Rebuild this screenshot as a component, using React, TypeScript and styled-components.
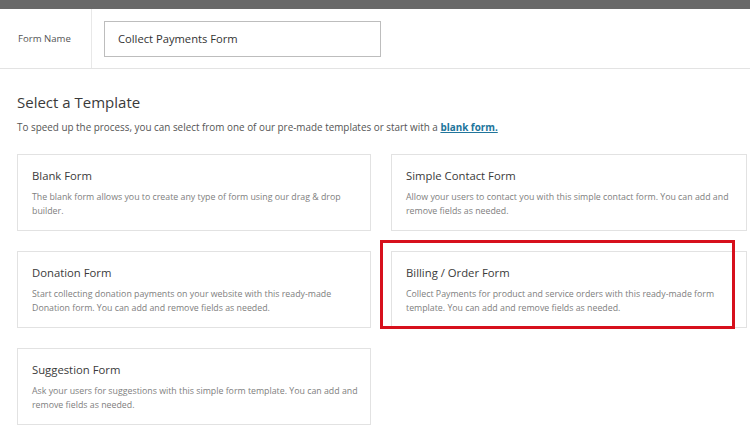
import * as React from 'react';
import styled, { createGlobalStyle } from 'styled-components';

const GlobalStyle = createGlobalStyle`
  html, body {
    margin: 0;
    padding: 0;
    background: #fff;
  }
  body {
    font-family: 'Open Sans', 'Noto Sans', sans-serif;
    color: #333;
  }
`;

const TopBar = styled.div`
  height: 9px;
  background: #696969;
`;

const Header = styled.div`
  display: flex;
  height: 59px;
  border-bottom: 1px solid #e3e3e3;
`;

const LabelCell = styled.div`
  width: 73px;
  padding-left: 18px;
  border-right: 1px solid #e8e8e8;
  display: flex;
  align-items: center;
  font-size: 9.6px;
  color: #555;
`;

const InputCell = styled.div`
  display: flex;
  align-items: center;
  padding-left: 12px;
`;

const NameInput = styled.input`
  box-sizing: border-box;
  width: 277px;
  height: 36px;
  border: 1px solid #bdbdbd;
  padding: 0 13px;
  font-family: inherit;
  font-size: 11.2px;
  color: #333;
  outline: none;
`;

const Main = styled.div`
  padding: 22px 3px 0 17px;
`;

const Title = styled.h2`
  margin: 0;
  font-size: 15px;
  font-weight: 400;
  color: #3a3a3a;
  line-height: 22px;
`;

const Lead = styled.p`
  margin: 6px 0 0;
  font-size: 9.9px;
  color: #555;
  line-height: 16px;
`;

const BlankLink = styled.a`
  color: #21759b;
  font-weight: 700;
  text-decoration: underline;
`;

const Grid = styled.div`
  margin-top: 19px;
  display: grid;
  grid-template-columns: 354px 356px;
  column-gap: 20px;
  row-gap: 20px;
`;

const Card = styled.div`
  position: relative;
  box-sizing: border-box;
  height: 77px;
  border: 1px solid #e2e2e2;
  padding: 12px 8px 0 14px;
`;

// red annotation frame drawn over the selected template
const Highlight = styled.div`
  position: absolute;
  left: -12px;
  top: -12px;
  right: 11px;
  bottom: -2px;
  border: 3px solid #d7101c;
  pointer-events: none;
`;

const CardTitle = styled.div`
  font-size: 11.3px;
  color: #3a3a3a;
  line-height: 17px;
`;

const CardText = styled.div`
  margin-top: 6px;
  font-size: 8.8px;
  color: #808080;
  line-height: 14px;
`;

const templates = [
  {
    title: 'Blank Form',
    text: 'The blank form allows you to create any type of form using our drag & drop builder.',
  },
  {
    title: 'Simple Contact Form',
    text: 'Allow your users to contact you with this simple contact form. You can add and remove fields as needed.',
  },
  {
    title: 'Donation Form',
    text: 'Start collecting donation payments on your website with this ready-made Donation form. You can add and remove fields as needed.',
  },
  {
    title: 'Billing / Order Form',
    text: 'Collect Payments for product and service orders with this ready-made form template. You can add and remove fields as needed.',
    highlight: true,
  },
  {
    title: 'Suggestion Form',
    text: 'Ask your users for suggestions with this simple form template. You can add and remove fields as needed.',
  },
];

export default function App() {
  return (
    <>
      <GlobalStyle />
      <TopBar />
      <Header>
        <LabelCell>Form Name</LabelCell>
        <InputCell>
          <NameInput defaultValue="Collect Payments Form" />
        </InputCell>
      </Header>
      <Main>
        <Title>Select a Template</Title>
        <Lead>
          To speed up the process, you can select from one of our pre-made templates or start with a{' '}
          <BlankLink href="#">blank form.</BlankLink>
        </Lead>
        <Grid>
          {templates.map((t) => (
            <Card key={t.title}>
              {t.highlight && <Highlight />}
              <CardTitle>{t.title}</CardTitle>
              <CardText>{t.text}</CardText>
            </Card>
          ))}
        </Grid>
      </Main>
    </>
  );
}
